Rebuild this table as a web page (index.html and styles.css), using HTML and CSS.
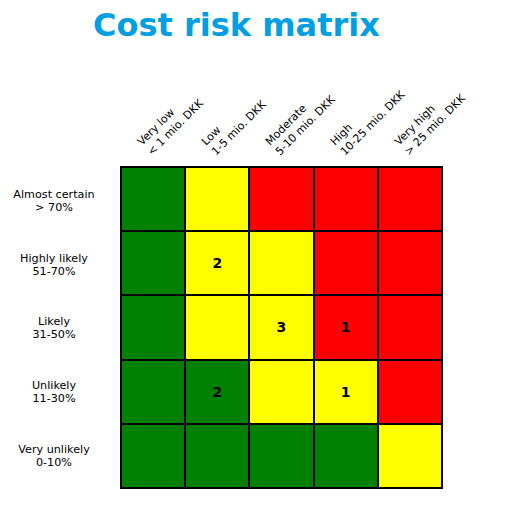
FILE: index.html
```html
<!DOCTYPE html>
<html>
<head>
<meta charset="utf-8">
<link rel="stylesheet" href="styles.css">
</head>
<body>
<div class="page">
  <h1 class="title">Cost risk matrix</h1>
  <div class="chart">
    <div class="corner"></div>
    <div class="col-heads">
      <div class="col-head"><span class="col-label">Very low<br>&lt; 1 mio. DKK</span></div>
      <div class="col-head"><span class="col-label">Low<br>1-5 mio. DKK</span></div>
      <div class="col-head"><span class="col-label">Moderate<br>5-10 mio. DKK</span></div>
      <div class="col-head"><span class="col-label">High<br>10-25 mio. DKK</span></div>
      <div class="col-head"><span class="col-label">Very high<br>&gt; 25 mio. DKK</span></div>
    </div>
    <div class="row-heads">
      <div class="row-head">Almost certain<br>&gt; 70%</div>
      <div class="row-head">Highly likely<br>51-70%</div>
      <div class="row-head">Likely<br>31-50%</div>
      <div class="row-head">Unlikely<br>11-30%</div>
      <div class="row-head">Very unlikely<br>0-10%</div>
    </div>
    <div class="matrix">
      <div class="cell green"></div>
      <div class="cell yellow"></div>
      <div class="cell red"></div>
      <div class="cell red"></div>
      <div class="cell red"></div>

      <div class="cell green"></div>
      <div class="cell yellow">2</div>
      <div class="cell yellow"></div>
      <div class="cell red"></div>
      <div class="cell red"></div>

      <div class="cell green"></div>
      <div class="cell yellow"></div>
      <div class="cell yellow">3</div>
      <div class="cell red">1</div>
      <div class="cell red"></div>

      <div class="cell green"></div>
      <div class="cell green">2</div>
      <div class="cell yellow"></div>
      <div class="cell yellow">1</div>
      <div class="cell red"></div>

      <div class="cell green"></div>
      <div class="cell green"></div>
      <div class="cell green"></div>
      <div class="cell green"></div>
      <div class="cell yellow"></div>
    </div>
  </div>
</div>
</body>
</html>
```

FILE: styles.css
```css
html, body {
  margin: 0;
  padding: 0;
  background: #ffffff;
}

.page {
  width: 506px;
  font-family: "DejaVu Sans", sans-serif;
  color: #000000;
}

.title {
  margin: 7px 0 0 0;
  width: 473px;
  height: 37px;
  line-height: 37px;
  font-size: 32px;
  font-weight: bold;
  text-align: center;
  color: #009fe3;
}

.chart {
  display: grid;
  grid-template-columns: 120px 323px;
  grid-template-rows: 122px 323px;
}

.col-heads {
  display: grid;
  grid-template-columns: repeat(5, 1fr);
  column-gap: 2px;
  padding: 0 2px;
}

.col-head {
  display: flex;
  align-items: flex-end;
  padding-left: 32px;
  padding-bottom: 8px;
  min-width: 0;
}

.col-label {
  flex-shrink: 0;
  white-space: nowrap;
  font-size: 11px;
  line-height: 13.5px;
  text-align: left;
  transform-origin: 0 100%;
  transform: rotate(-45deg);
}

.row-heads {
  display: grid;
  grid-template-rows: repeat(5, 1fr);
  row-gap: 2px;
  padding: 4px 12px 2px 0;
}

.row-head {
  display: flex;
  align-items: center;
  justify-content: center;
  text-align: center;
  font-size: 11.2px;
  line-height: 13px;
}

.matrix {
  display: grid;
  grid-template-columns: repeat(5, 1fr);
  grid-template-rows: repeat(5, 1fr);
  gap: 2px;
  padding: 2px;
  background: #000000;
  box-sizing: border-box;
  width: 323px;
  height: 323px;
}

.cell {
  display: flex;
  align-items: center;
  justify-content: center;
  font-size: 14px;
  font-weight: bold;
}

.green { background: #008000; }
.yellow { background: #ffff00; }
.red { background: #ff0000; }
```
